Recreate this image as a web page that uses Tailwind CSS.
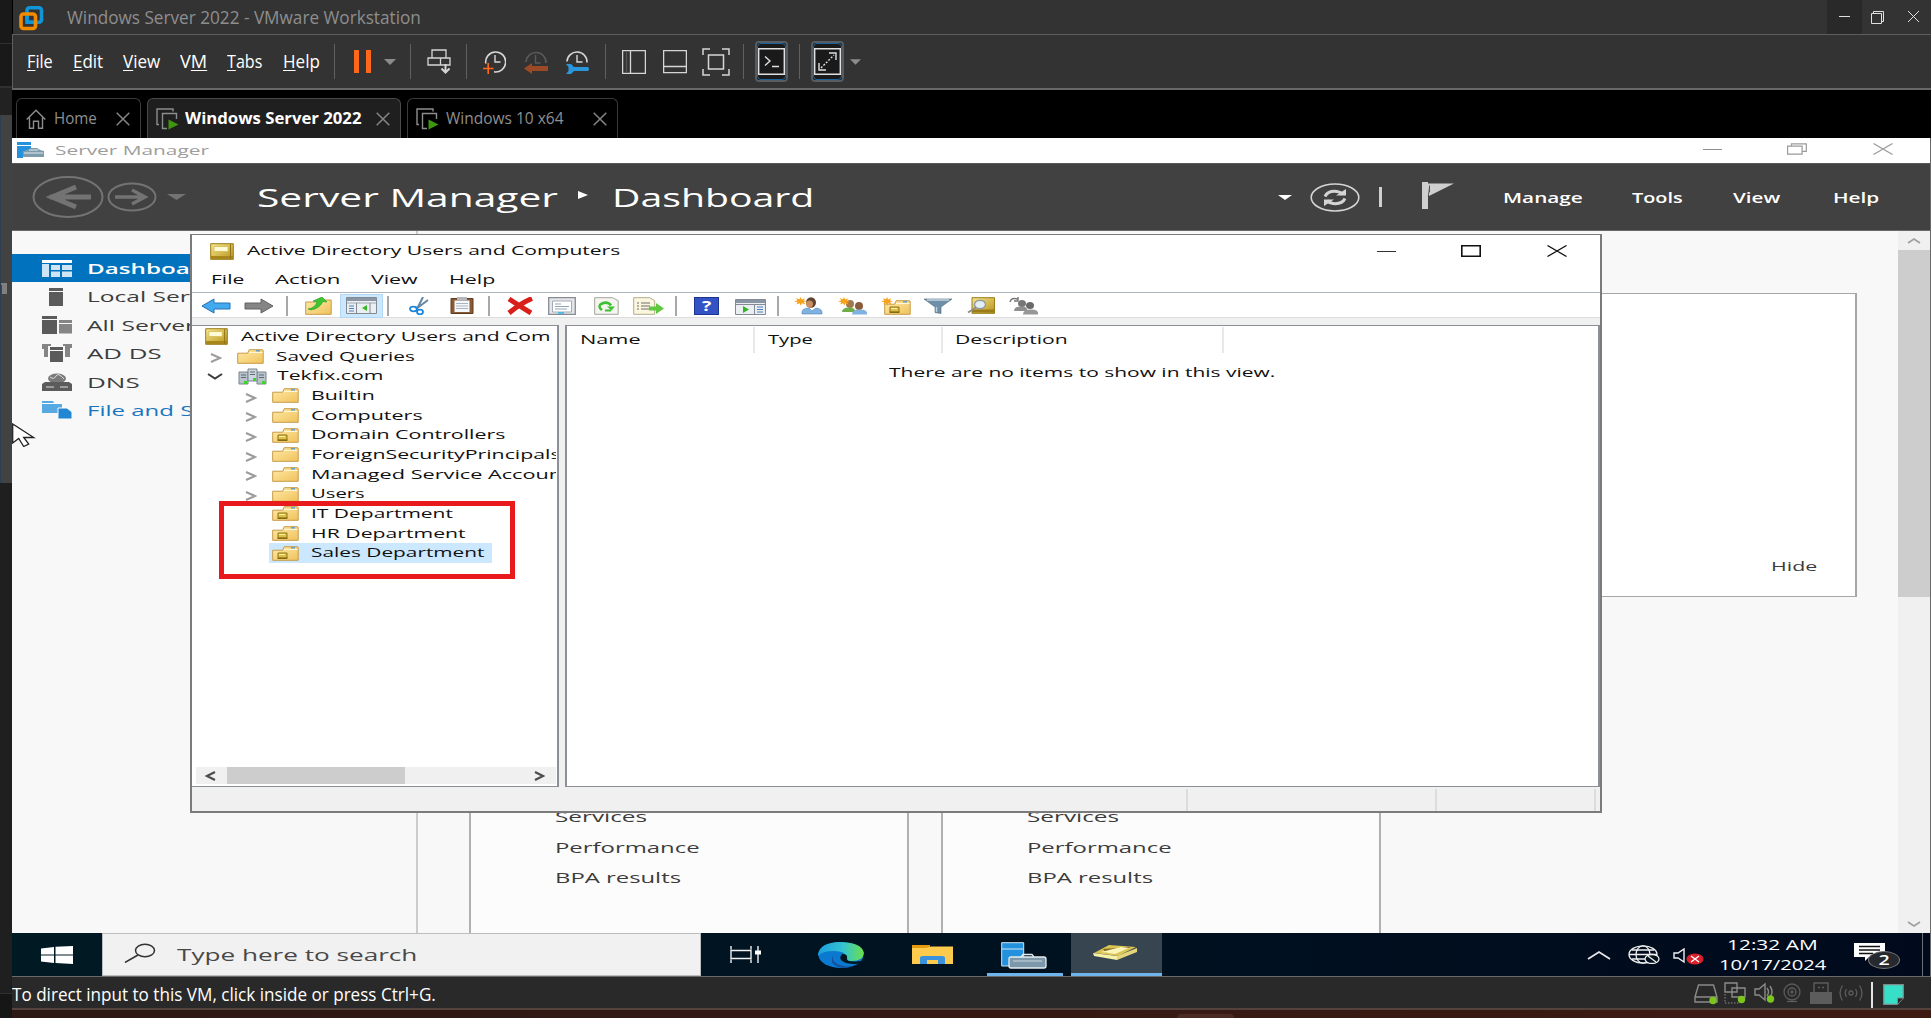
<!DOCTYPE html>
<html lang="en">
<head>
<meta charset="utf-8">
<title>Windows Server 2022 - VMware Workstation</title>
<script src="https://cdn.jsdelivr.net/npm/@tailwindcss/browser@4"></script>
</head>
<body class="w-[1931px] h-[1018px] overflow-hidden bg-[#1f1f1f] font-['Open_Sans',sans-serif] flex whitespace-nowrap">

<!-- shared glyphs -->
<svg class="absolute w-0 h-0">
  <defs>
    <linearGradient id="gold" x1="0" y1="0" x2="1" y2="1"><stop offset="0" stop-color="#ffeaa8"/><stop offset="1" stop-color="#f0c25c"/></linearGradient>
    <linearGradient id="book" x1="0" y1="0" x2="1" y2="1"><stop offset="0" stop-color="#f4e58e"/><stop offset="1" stop-color="#b8941a"/></linearGradient>
    <linearGradient id="edgeA" x1="0" y1="0" x2="1" y2="0"><stop offset="0" stop-color="#1a9fe0"/><stop offset=".55" stop-color="#35c3d0"/><stop offset="1" stop-color="#6be04a"/></linearGradient>
  </defs>
  <symbol id="folder" viewBox="0 0 27 15" preserveAspectRatio="none">
    <path d="M.7 4.2h10l1.5-3.5h13a1 1 0 0 1 1 1v12.600H.7z" fill="url(#gold)" stroke="#c79a48" stroke-width="1"/>
    <path d="M12 3.500h13.500" stroke="#fff6d8"/><path d="M19 1.800h4" stroke="#4b9be0" stroke-width="1.300"/>
  </symbol>
  <symbol id="ou" viewBox="0 0 27 15" preserveAspectRatio="none">
    <path d="M.7 4.200h10l1.500-3.500h13a1 1 0 0 1 1 1v12.600H.7z" fill="url(#gold)" stroke="#c79a48" stroke-width="1"/>
    <path d="M12 3.500h13.500" stroke="#fff6d8"/><path d="M19 1.800h4" stroke="#4b9be0" stroke-width="1.300"/>
    <path d="M6 7h9v5H6z" fill="#dcc04c" stroke="#937714"/><path d="M7 8.500h6" stroke="#fff3a0"/><path d="M5.500 12.300h10" stroke="#7c6410" stroke-width="1.200"/>
  </symbol>
  <symbol id="adbook" viewBox="0 0 24 17" preserveAspectRatio="none">
    <path d="M.7.700h22.600v15.600H.7z" fill="url(#book)" stroke="#9c7c18"/><path d="M1 13h22v3H1z" fill="#a8861c"/><path d="M4 3.500h14v5H4z" fill="#fffbd6" stroke="#d6bc50" stroke-width=".8"/><path d="M20.500 1v15" stroke="#8f7316"/>
  </symbol>
  <symbol id="chev" viewBox="0 0 12 10" preserveAspectRatio="none"><path d="M1 1l9 4-9 4" fill="none" stroke="#9c9c9c" stroke-width="2"/></symbol>
  <symbol id="vmtab" viewBox="0 0 23 22">
    <path d="M3 16.500H1V1h16v2.500" fill="none" stroke="#8d8d8d" stroke-width="1.400"/><path d="M11 20.500H6.500V5.500h14V11" fill="none" stroke="#8d8d8d" stroke-width="1.400"/><path d="M12.500 11.500l10 5-10 5z" fill="#3f960f"/>
  </symbol>
  <symbol id="tabx" viewBox="0 0 14 14"><path d="M.7.700l12.600 12.600M13.300.700L.7 13.300" stroke="#858585" stroke-width="1.500"/></symbol>
  <symbol id="burst" viewBox="0 0 14 12" preserveAspectRatio="none"><path d="M6.500 0l1.200 3.200L11 1.500 9.500 4.600l3.800.9-3.600 1.200L11.500 10 7.800 8.300 6.800 11.500 5.600 8.300 2.300 9.900l1.300-3L0 5.800l3.500-1.200L2 1.600l3.400 1.500z" fill="#f6a21c"/></symbol>
</svg>

<!-- strip of the window behind -->
<aside class="w-3 shrink-0 flex flex-col bg-[#1f1f1f]">
  <div class="h-[43px] bg-[#191919]"></div>
  <div class="h-px bg-[#303030]"></div>
  <div class="h-[42px] bg-[#191919]"></div>
  <div class="h-[2px] bg-[#303030]"></div>
  <div class="h-[27px] bg-[#222222]"></div>
  <div class="h-[368px] bg-[#424242] border-l border-[#2f4050] flex items-start"><div class="mt-[168px] w-[6px] h-[11px] border-t-2 border-r-[5px] border-[#808080]"></div></div>
  <div class="h-[510px] bg-[#1f1f1f]"></div>
  <div class="h-px bg-[#303030]"></div>
  <div class="flex-1 bg-[#161616]"></div>
</aside>

<main class="w-[1919px] shrink-0 flex flex-col">
  <!-- host title bar -->
  <header class="h-[34px] shrink-0 bg-[#333333] border-l border-black flex items-center">
    <svg class="ml-[6px] w-[25px] h-[25px] mt-[2px]" viewBox="0 0 25 25" fill="none" stroke-width="3.600"><rect x="8" y="1.800" width="14.500" height="14.500" rx="2.500" stroke="#0f95d8"/><rect x="2" y="8" width="14.500" height="14.500" rx="2.500" stroke="#f38b00"/><path d="M8 10v6.300h6" stroke="#0f95d8"/></svg>
    <span class="ml-[23px] text-[17.5px] text-[#8e8e8e] inline-block origin-left" data-w="354">Windows Server 2022 - VMware Workstation</span>
    <div class="ml-auto w-[35px] h-[34px] bg-[#292929] flex items-center justify-center"><div class="w-[11px] h-px bg-[#e0e0e0] -mt-px"></div></div>
    <svg class="ml-[9px] w-[13px] h-[13px]" viewBox="0 0 13 13" fill="none" stroke="#e0e0e0"><path d="M.5 2.500h10v10H.5zM2.500 2.500v-2h10v10h-2"/></svg>
    <svg class="ml-6 mr-[12px] w-[11px] h-[11px] mb-px" viewBox="0 0 11 11"><path d="M0 0l11 11M11 0L0 11" stroke="#e0e0e0"/></svg>
  </header>

  <!-- menu and toolbar -->
  <nav class="h-[56px] shrink-0 bg-[#333333] border-t border-l border-t-[#5e5e5e] border-l-[#5e5e5e] flex items-start">
    <div class="h-[53px] w-full flex items-center text-[17.500px] text-white">
      <span class="ml-[14px] inline-block origin-left" data-w="26"><u class="underline-offset-2">F</u>ile</span>
      <span class="ml-5 inline-block origin-left" data-w="30"><u class="underline-offset-2">E</u>dit</span>
      <span class="ml-5 inline-block origin-left" data-w="37"><u class="underline-offset-2">V</u>iew</span>
      <span class="ml-[20px] inline-block origin-left" data-w="27">V<u class="underline-offset-2">M</u></span>
      <span class="ml-[20px] inline-block origin-left" data-w="35"><u class="underline-offset-2">T</u>abs</span>
      <span class="ml-5 inline-block origin-left" data-w="37"><u class="underline-offset-2">H</u>elp</span>
      <div class="ml-[14px] w-px h-[35px] bg-[#606060]"></div>
      <div class="ml-[19px] w-[5px] h-[23px] bg-[#ff671b]"></div><div class="ml-[7px] w-[5px] h-[23px] bg-[#ff671b]"></div>
      <svg class="ml-[13px] w-3 h-[6px]" viewBox="0 0 12 6"><path d="M0 0h12L6 6z" fill="#8c8c8c"/></svg>
      <div class="ml-[14px] w-px h-[35px] bg-[#606060]"></div>
      <svg class="ml-4 w-6 h-[25px]" viewBox="0 0 24 25" fill="none" stroke="#d6d6d6" stroke-width="1.300"><path d="M5 9V1h14v8M1 9h22v7H1zM13.500 9v7"/><path d="M18.500 15v8M14.500 19.500l4 4 4-4" stroke-width="2"/></svg>
      <div class="ml-[15px] w-px h-[35px] bg-[#606060]"></div>
      <svg class="ml-4 w-[23px] h-6" viewBox="0 0 23 24" fill="none"><path d="M2.800 13.500A10 10 0 1 1 11 21.800" stroke="#d6d6d6" stroke-width="1.600"/><path d="M12 5v7h5.500" stroke="#d6d6d6" stroke-width="1.400"/><path d="M0 18.500h10.500M5.200 13v11" stroke="#ff671b" stroke-width="1.600"/></svg>
      <svg class="ml-[18px] w-[24px] h-6" viewBox="0 0 24 24" fill="none"><path d="M2 12a10 10 0 1 1 20 1" stroke="#5a5a5a" stroke-width="1.600"/><path d="M11.500 5v8h5" stroke="#5a5a5a" stroke-width="1.400"/><path d="M0 18.500l8-5.500v3h16v5H8v3z" fill="#9b4a25"/></svg>
      <svg class="ml-[17px] w-[25px] h-6" viewBox="0 0 25 24" fill="none"><path d="M2 11.500a10 10 0 1 1 20 1" stroke="#d6d6d6" stroke-width="1.600"/><path d="M12 5v7h5.500" stroke="#d6d6d6" stroke-width="1.400"/><path d="M1 14h5l3 3h14q2 2 0 4H9l-3 3H1l2.500-3v-4z" fill="#2a96dc"/></svg>
      <div class="ml-[15px] w-px h-[35px] bg-[#606060]"></div>
      <svg class="ml-[16px] w-6 h-6" viewBox="0 0 24 24" fill="none" stroke="#d6d6d6" stroke-width="1.300"><path d="M.6.600h22.800v22.800H.6zM8.500.600v22.800" /><path d="M4.500 1v22" stroke="#555"/></svg>
      <svg class="ml-[17px] w-6 h-6" viewBox="0 0 24 24" fill="none" stroke="#d6d6d6" stroke-width="1.300"><path d="M.6.600h22.800v22H.6zM.6 16.500h22.800"/></svg>
      <svg class="ml-[15px] w-7 h-7" viewBox="0 0 28 28" fill="none" stroke="#d6d6d6" stroke-width="1.500"><path d="M6.500 7h15v14h-15zM1 7V1h7M20 1h7v6M27 21v6h-7M8 27H1v-6"/></svg>
      <div class="ml-[13px] w-px h-[35px] bg-[#606060]"></div>
      <div class="ml-[11px] w-[33px] h-[41px] rounded border-2 border-[#565c62] bg-[#1a1a1a]"><div class="w-full h-full border border-[#1c639c] rounded-sm flex items-center justify-center"><svg class="w-[27px] h-[27px]" viewBox="0 0 27 27" fill="none" stroke="#e0e0e0" stroke-width="1.400"><path d="M.7.700h25.600v25.600H.7z"/><path d="M7 8.500l5 4.500-5 4.500M14 18.500h7"/></svg></div></div>
      <div class="ml-[11px] w-px h-[35px] bg-[#606060]"></div>
      <div class="ml-[11px] w-[33px] h-[41px] rounded border-2 border-[#565c62] bg-[#1a1a1a]"><div class="w-full h-full border border-[#1c639c] rounded-sm flex items-center justify-center"><svg class="w-[27px] h-[27px]" viewBox="0 0 27 27" fill="none" stroke="#e0e0e0" stroke-width="1.400"><path d="M.7.700h25.600v25.600H.7z"/><path d="M15 5h7v7M5 15v7h7"/><path d="M7 20L20 7" stroke-dasharray="2 1.500"/></svg></div></div>
      <svg class="ml-[6px] w-[11px] h-[6px]" viewBox="0 0 12 6"><path d="M0 0h12L6 6z" fill="#8c8c8c"/></svg>
    </div>
  </nav>

  <!-- tabs -->
  <div class="h-12 shrink-0 bg-black flex items-end pl-[4px] -mt-[2px] border-t-2 border-[#676767] box-content text-[15.500px] text-[#8f8f8f]">
    <div class="w-[125px] h-10 border border-b-0 border-[#3a3a3a] rounded-t-md flex items-center">
      <svg class="ml-[9px] w-5 h-5 shrink-0" viewBox="0 0 20 20" fill="none" stroke="#8d8d8d" stroke-width="1.400"><path d="M.7 10.500L10 1.200l9.300 9.300M3.500 8.500v10.800h4v-7h5v7h4V8.500"/></svg>
      <span class="ml-[8px] inline-block origin-left" data-w="43">Home</span>
      <svg class="ml-[19px] w-[14px] h-[14px] shrink-0"><use href="#tabx"/></svg>
    </div>
    <div class="ml-[6px] w-[254px] h-10 bg-[#1f1f1f] border border-b-0 border-[#4a4a4a] rounded-t-md flex items-center">
      <svg class="ml-2 w-[23px] h-[22px] shrink-0"><use href="#vmtab"/></svg>
      <span class="ml-[6px] font-bold text-white inline-block origin-left" data-w="177">Windows Server 2022</span>
      <svg class="ml-[14px] w-[14px] h-[14px] shrink-0"><use href="#tabx"/></svg>
    </div>
    <div class="ml-[6px] w-[211px] h-10 border border-b-0 border-[#3a3a3a] rounded-t-md flex items-center">
      <svg class="ml-2 w-[23px] h-[22px] shrink-0"><use href="#vmtab"/></svg>
      <span class="ml-[7px] inline-block origin-left" data-w="118">Windows 10 x64</span>
      <svg class="ml-[29px] w-[14px] h-[14px] shrink-0"><use href="#tabx"/></svg>
    </div>
  </div>

  <!-- guest screen -->
  <section class="relative h-[839px] shrink-0 border-r border-[#6a6a6a] bg-[#f8f8f8] flex flex-col overflow-hidden">
    <!-- Server Manager title bar -->
    <div class="h-[26px] shrink-0 bg-white border-b border-[#5a5a5a] flex items-center">
      <svg class="ml-[5px] w-[27px] h-4 mb-px" viewBox="0 0 27 16"><path d="M0 0h14v3H0zM0 4h14v3l-8 3v6H0z" fill="#2590dc"/><path d="M6 9l5-1 3-2h6l3 2 4 1v6H6z" fill="#7e9bac"/><path d="M12 8h9M7 11h19" stroke="#dfe9ee" fill="none"/></svg>
      <span class="ml-[11px] text-[13px] text-[#9d9d9d] inline-block origin-left" data-w="154">Server Manager</span>
      <svg class="ml-auto w-[19px] h-3 mb-[3px]" viewBox="0 0 19 12"><path d="M0 6.500h19" stroke="#8f8f8f"/></svg>
      <svg class="ml-[65px] w-5 h-3 mb-[3px]" viewBox="0 0 20 12" fill="none" stroke="#9a9a9a" stroke-width="1.200"><path d="M.6 3.200h14.500v8H.6zM4.500 3V.800h14.800v7.500h-4"/></svg>
      <svg class="ml-[66px] mr-[37px] w-5 h-3 mb-[3px]" viewBox="0 0 20 12"><path d="M.5.500l19 11M19.500.500l-19 11" stroke="#9a9a9a" stroke-width="1.200"/></svg>
    </div>
    <!-- Server Manager header -->
    <div class="h-[67px] shrink-0 bg-[#414141] border-b border-[#6a6a6a] flex items-center text-white">
      <svg class="ml-5 w-[154px] h-[42px] shrink-0" viewBox="0 0 154 42" fill="none" stroke="#737373"><ellipse cx="36" cy="21" rx="34.500" ry="20" stroke-width="2"/><path d="M59 21H18M44 11L20 21l24 10" stroke-width="5"/><ellipse cx="100" cy="21" rx="23.500" ry="13.500" stroke-width="2"/><path d="M83 21h29M100 14l13 7-13 7" stroke-width="3.500"/><path d="M135 18h19l-9.500 6z" fill="#737373" stroke="none"/></svg>
      <span class="ml-[71px] text-[26px] leading-none inline-block origin-left" data-w="301">Server Manager</span>
      <svg class="ml-[20px] w-[10px] h-2 mb-1 shrink-0" viewBox="0 0 10 8"><path d="M0 0l10 4-10 4z" fill="#fff"/></svg>
      <span class="ml-[24px] text-[26px] leading-none inline-block origin-left" data-w="202">Dashboard</span>
      <svg class="ml-[464px] w-[14px] h-[5px] shrink-0" viewBox="0 0 14 5"><path d="M0 0h14L7 5z" fill="#fff"/></svg>
      <svg class="ml-[18px] w-[50px] h-[29px] shrink-0" viewBox="0 0 50 29" fill="none" stroke="#d4d4d4"><ellipse cx="25" cy="14.500" rx="23.800" ry="13.500" stroke-width="1.600"/><path d="M15 13.500q3-6 12-5 4 .5 6 3M35 15.500q-3 6-12 5-4-.5-6-3" stroke-width="3"/><path d="M36 6v6.500H26zM14 23v-6.500h10z" fill="#d4d4d4" stroke="none"/></svg>
      <div class="ml-[19px] w-[3px] h-5 bg-[#cfcfcf]"></div>
      <svg class="ml-[40px] w-8 h-[27px] mb-1 shrink-0" viewBox="0 0 32 27"><path d="M0 0h6v27H0z" fill="#cfcfcf"/><path d="M5.500 1.500H32L7 14z" fill="#cfcfcf"/><path d="M7.500 3.500v7" stroke="#555"/></svg>
      <div class="w-[376px] shrink-0 ml-[49px] grid grid-cols-[129px_101px_100px_46px] text-[14px] font-semibold">
        <span class="inline-block origin-left justify-self-start" data-w="80">Manage</span><span class="inline-block origin-left justify-self-start" data-w="51">Tools</span><span class="inline-block origin-left justify-self-start" data-w="47">View</span><span class="inline-block origin-left justify-self-start" data-w="46">Help</span>
      </div>
    </div>

    <!-- Server Manager body -->
    <div class="h-[702px] shrink-0 flex text-[15px] text-[#3c3c3c]">
      <div class="w-[406px] shrink-0 border-r-2 border-[#cccccc] pt-[23px] flex flex-col">
        <div class="h-[28.400px] bg-[#0072be] text-white font-semibold flex items-center pl-[30px]">
          <svg class="w-[30px] h-[17px]" viewBox="0 0 30 17"><path d="M0 0h30v3H0z" fill="#fff"/><path d="M0 4h7v13H0zM9 5h9v5H9zM20 5h10v5H20zM9 11.500h9V17H9zM20 11.500h10V17H20z" fill="#cfe4f4"/></svg>
          <span class="ml-[15px] inline-block origin-left" data-w="129">Dashboard</span>
        </div>
        <div class="h-[28.400px] flex items-center pl-[30px]">
          <svg class="w-[30px] h-[18px]" viewBox="0 0 30 18"><path d="M7 0h14v3H7zM7 4h14v14H7z" fill="#5b5b5b"/></svg>
          <span class="ml-[15px] inline-block origin-left" data-w="139">Local Server</span>
        </div>
        <div class="h-[28.400px] flex items-center pl-[30px]">
          <svg class="w-[30px] h-[18px]" viewBox="0 0 30 18"><path d="M0 0h15v3H0zM0 4h15v14H0z" fill="#5b5b5b"/><path d="M17 4h13v3H17zM17 8h13v9.500H17z" fill="#858585"/></svg>
          <span class="ml-[15px] inline-block origin-left" data-w="120">All Servers</span>
        </div>
        <div class="h-[28.400px] flex items-center pl-[30px]">
          <svg class="w-[30px] h-[18px]" viewBox="0 0 30 18"><path d="M0 0h9v2H6v11H2V5H0zM30 0h-9v2h2v11h5V4h2z" fill="#858585"/><path d="M8 3h13v3H8zM8 7h13v11H8z" fill="#5b5b5b"/></svg>
          <span class="ml-[15px] inline-block origin-left" data-w="74">AD DS</span>
        </div>
        <div class="h-[28.400px] flex items-center pl-[30px]">
          <svg class="w-[30px] h-[18px]" viewBox="0 0 30 18"><ellipse cx="15" cy="5.500" rx="9" ry="5" fill="#7a7a7a"/><path d="M8 4q4 3 6-1t8 3" stroke="#ddd" fill="none"/><path d="M3 9h24l3 2v7H0v-7z" fill="#5b5b5b"/><path d="M4 14h8M18 14h8" stroke="#ddd"/></svg>
          <span class="ml-[15px] inline-block origin-left" data-w="52">DNS</span>
        </div>
        <div class="h-[28.400px] flex items-center pl-[30px] text-[#1a75c0]">
          <svg class="w-[30px] h-[18px]" viewBox="0 0 30 18"><path d="M0 0h11l1 2h8v10H0z" fill="#57a9e2"/><path d="M0 2.500h20" stroke="#fff"/><path d="M16 7h9l5 4v7H16z" fill="#2187d4" stroke="#f8f8f8"/></svg>
          <span class="ml-[15px] inline-block origin-left" data-w="277">File and Storage Services</span>
        </div>
      </div>
      <div class="w-[1480px] shrink-0 relative flex flex-col">
        <div class="mt-[62px] ml-[51px] w-[1388px] h-[304px] bg-white border border-r-2 border-[#a6a6a6] flex items-end justify-end pr-[38px] pb-5 text-[13px]"><span class="inline-block origin-left" data-w="46">Hide</span></div>
        <div class="ml-[51px] mt-6 flex gap-[32px] flex-1 text-[14px]">
          <div class="w-[440px] bg-[#fcfcfc] border-x-2 border-[#b0b0b0] pl-[84px] pt-[181px] flex flex-col items-start leading-[30.700px]"><span class="inline-block origin-left" data-w="92">Services</span><span class="inline-block origin-left" data-w="145">Performance</span><span class="inline-block origin-left" data-w="126">BPA results</span></div>
          <div class="w-[440px] bg-[#fcfcfc] border-x-2 border-[#b0b0b0] pl-[84px] pt-[181px] flex flex-col items-start leading-[30.700px]"><span class="inline-block origin-left" data-w="92">Services</span><span class="inline-block origin-left" data-w="145">Performance</span><span class="inline-block origin-left" data-w="126">BPA results</span></div>
        </div>
      </div>
      <div class="w-8 shrink-0 bg-[#f0f0f0] flex flex-col items-center">
        <svg class="mt-[7px] w-[14px] h-[6px]" viewBox="0 0 14 6"><path d="M1 5l6-4 6 4" fill="none" stroke="#a0a0a0" stroke-width="1.700"/></svg>
        <div class="mt-[6px] w-full h-[347px] bg-[#cdcdcd]"></div>
        <svg class="mt-auto mb-[6px] w-[14px] h-[6px]" viewBox="0 0 14 6"><path d="M1 1l6 4 6-4" fill="none" stroke="#a0a0a0" stroke-width="1.700"/></svg>
      </div>
    </div>

    <!-- guest taskbar -->
    <div class="h-[44px] shrink-0 flex items-center bg-linear-to-r from-[#001a24] to-[#000a1c] text-white border-b border-[#6a6a6a]">
      <svg class="ml-[29px] w-8 h-[18px]" viewBox="0 0 32 18" fill="#fff"><path d="M0 2.500L13 1v7.500H0zM14.500.800L32 0v8.500H14.500zM0 9.500h13V17L0 15.500zM14.500 9.500H32V18l-17.500-.9z"/></svg>
      <div class="ml-[29px] w-[599px] h-full bg-[#f1f1f1] border border-[#bdbdbd] flex items-center">
        <svg class="ml-[21px] w-8 h-5 mb-1" viewBox="0 0 32 20" fill="none" stroke="#333" stroke-width="1.500"><ellipse cx="21" cy="7.500" rx="9.500" ry="6.300"/><path d="M14 12L1 19.500"/></svg>
        <span class="ml-[21px] text-[16px] text-[#484848] inline-block origin-left" data-w="240">Type here to search</span>
      </div>
      <svg class="ml-[29px] w-8 h-[17px]" viewBox="0 0 32 17" fill="none" stroke="#f0f0f0" stroke-width="1.400"><path d="M1 4.500h20v8H1zM1 0v3.500M21 0v3.500M1 13.500V17M21 13.500V17M28 0v17"/><path d="M25 4.500h6v4h-6z" fill="#fff" stroke="none"/></svg>
      <svg class="ml-14 w-[46px] h-[26px]" viewBox="0 0 46 26"><ellipse cx="23" cy="13" rx="22.500" ry="13" fill="#0b79d0"/><path d="M0 12Q2 1 20 0q24 0 26 11-1 8-12 8-8 0-6-4 0-6-12-6Q4 9 0 14z" fill="url(#edgeA)"/><path d="M17 11q-6 8 5 12 10 4 20-2Q34 26 24 26 8 22 17 11z" fill="#12519c"/><path d="M24 12q6 0 5 4-1 5 13 3l1 2q-6 2-15 0-9-3-4-9z" fill="#02161f"/></svg>
      <svg class="ml-[48px] w-[41px] h-5" viewBox="0 0 41 20"><path d="M0 0h18v4H0z" fill="#e39a0c"/><path d="M0 3h14l5-1.500h22V19H0z" fill="#fccb4e"/><path d="M8 19v-6q0-2 3-2h19q3 0 3 2v6h-7v-4H15v4z" fill="#3b92dc"/></svg>
      <div class="ml-[34px] w-[76px] h-full border-b-[3px] border-[#6fb4ea] flex pl-[14px] pt-[9px]">
        <svg class="w-[46px] h-[27px]" viewBox="0 0 46 27"><path d="M.7.700h22V15l-12 9H.7z" fill="#2391dd" stroke="#cfe6f7"/><path d="M1 7h21" stroke="#cfe6f7"/><rect x="8" y="15" width="37" height="11" rx="2" fill="#7d98aa" stroke="#e4edf2" stroke-width="1.300"/><path d="M20 15l2-2.500h9l2 2.500" fill="none" stroke="#e4edf2" stroke-width="1.300"/><path d="M12 19h29" stroke="#c9d8e0"/></svg>
      </div>
      <div class="ml-[8px] w-[91px] h-full bg-[#364550] border-b-[3px] border-[#6fb4ea] flex pl-[22px] pt-[11px]">
        <svg class="w-[45px] h-[17px]" viewBox="0 0 45 17"><path d="M1 9L16 1l27 2-18 9z" fill="#dcc453"/><path d="M10 5l28-2-10 4-15 2z" fill="#7c681c"/><path d="M0 9l24 3v4L1 12z" fill="#f6f0a8"/><path d="M24 12L44 4v4L24 16z" fill="#e5d67a"/><path d="M8 8l20-5 8 1-14 6z" fill="#fbf4b6"/></svg>
      </div>
      <svg class="ml-auto w-6 h-[10px]" viewBox="0 0 24 10"><path d="M1 9l11-7 11 7" fill="none" stroke="#e8e8e8" stroke-width="1.700"/></svg>
      <svg class="ml-[17px] w-8 h-[19px]" viewBox="0 0 32 19" fill="none" stroke="#f0f0f0" stroke-width="1.300"><ellipse cx="15" cy="9.500" rx="14" ry="8.700"/><ellipse cx="15" cy="9.500" rx="7" ry="8.700"/><path d="M1 9.500h28M4 5h22M4 14h15"/><ellipse cx="24" cy="14" rx="7" ry="4.500" fill="#02101e"/><path d="M20 11l8 6"/></svg>
      <svg class="ml-[13px] w-[31px] h-[17px] mt-[3px]" viewBox="0 0 31 17"><path d="M1 5h4l6-4v13l-6-4H1z" fill="none" stroke="#f0f0f0" stroke-width="1.400"/><ellipse cx="22" cy="11" rx="8.500" ry="5.500" fill="#d9202b"/><path d="M18 8l8 6M26 8l-8 6" stroke="#fff" stroke-width="1.400"/></svg>
      <div class="ml-[15px] w-[107px] text-[14px] leading-[19.500px] flex flex-col"><span class="ml-[8px] self-start inline-block origin-left" data-w="91">12:32 AM</span><span class="self-start inline-block origin-left" data-w="107">10/17/2024</span></div>
      <div class="ml-[28px] relative w-[46px] h-[27px] mt-1">
        <svg class="w-[31px] h-[18px]" viewBox="0 0 31 18"><path d="M0 0h31v14H15l-4 4v-4H0z" fill="#fff"/><path d="M5 3.500h21M5 7h21M5 10.500h14" stroke="#111" stroke-width="1.300"/></svg>
        <div class="absolute left-[14px] top-[8px] w-[32px] h-[18px] rounded-[50%] bg-[#26292e] border border-[#7a7a7a] flex items-center justify-center text-[14px] font-semibold leading-none"><span class="inline-block scale-x-140">2</span></div>
      </div>
      <div class="ml-[22px] mr-[7px] w-px h-full bg-[#6a7076]"></div>
    </div>

    <!-- Active Directory Users and Computers window -->
    <div class="absolute left-[178px] top-[96px] w-[1412px] h-[579px] bg-white border-2 border-t border-[#7b7b7b] flex flex-col text-[13px] text-[#111]">
      <div class="h-[32px] shrink-0 flex items-center">
        <svg class="ml-[18px] w-6 h-[17px]"><use href="#adbook"/></svg>
        <span class="ml-[13px] inline-block origin-left" data-w="374">Active Directory Users and Computers</span>
        <svg class="ml-auto w-[19px] h-3" viewBox="0 0 19 12"><path d="M0 6.500h19" stroke="#333"/></svg>
        <svg class="ml-[65px] w-5 h-3" viewBox="0 0 20 12"><path d="M.8.800h18.400v10.400H.8z" fill="none" stroke="#111" stroke-width="1.600"/></svg>
        <svg class="ml-[66px] mr-[33px] w-5 h-3" viewBox="0 0 20 12"><path d="M.5.500l19 11M19.500.500l-19 11" stroke="#111" stroke-width="1.300"/></svg>
      </div>
      <div class="h-[26px] shrink-0 flex items-center border-b border-[#aeb4bb]">
        <span class="ml-[19px] inline-block origin-left" data-w="34">File</span>
        <span class="ml-[30px] inline-block origin-left" data-w="65">Action</span>
        <span class="ml-[31px] inline-block origin-left" data-w="46">View</span>
        <span class="ml-[32px] inline-block origin-left" data-w="46">Help</span>
      </div>
      <div class="h-[25px] shrink-0 flex items-center border-b border-[#dcdcdc] pt-px">
        <svg class="ml-[9px] w-[30px] h-4" viewBox="0 0 30 16"><path d="M1 8l12-7v4h16v6H13v4z" fill="#43aaf0" stroke="#2472b4"/></svg>
        <svg class="ml-[13px] w-[30px] h-4" viewBox="0 0 30 16"><path d="M29 8L17 1v4H1v6h16v4z" fill="#858585" stroke="#636363"/></svg>
        <div class="ml-3 w-[2px] h-5 bg-[#a8a8a8]"></div>
        <svg class="ml-[17px] w-[27px] h-[18px]" viewBox="0 0 27 18"><path d="M.7 5h10l1.500-2h14v14.300H.7z" fill="url(#gold)" stroke="#c79a48"/><path d="M3 12q7-1 9-7l-4-1 9-4 5 5-4-.5Q14 12 6 13z" fill="#3cc431" stroke="#229a1e" stroke-width=".6"/></svg>
        <div class="ml-[8px] w-[43px] h-6 bg-[#cce8ff] border border-[#b2d8f5] flex items-center justify-center"><svg class="w-[31px] h-[17px]" viewBox="0 0 31 17"><path d="M.5.500h30v16H.5z" fill="#eceff2" stroke="#828a94"/><path d="M1 1h29v3H1z" fill="#8a96a4"/><path d="M1 6h29" stroke="#a0a8b0"/><path d="M10.500 6v10M24 6v10" stroke="#828a94"/><path d="M3 9h5M3 11.500h5M3 14h5" stroke="#4a7fc0"/><path d="M21 8v6l-5-3z" fill="#35b52a"/></svg></div>
        <div class="ml-1 w-[2px] h-5 bg-[#a8a8a8]"></div>
        <svg class="ml-[20px] w-5 h-[18px]" viewBox="0 0 20 18" fill="none"><path d="M14 0L8 12M19 3L7 12" stroke="#6487a4" stroke-width="2"/><ellipse cx="4.500" cy="12" rx="3.500" ry="2.300" stroke="#1b86da" stroke-width="1.800"/><ellipse cx="11" cy="15" rx="3" ry="2.300" stroke="#1b86da" stroke-width="1.800"/></svg>
        <svg class="ml-[21px] w-6 h-[17px]" viewBox="0 0 24 17"><path d="M1 1.500h22v15H1z" fill="#8a5a34" stroke="#5f3c20"/><path d="M4.500 3.500h15v11.500h-15z" fill="#f5f7fa"/><path d="M7 0h10v3.500H7z" fill="#b4b8be"/><path d="M6 6.500h12M6 9h12M6 11.500h12" stroke="#a7b4c4"/></svg>
        <div class="ml-[14px] w-[2px] h-5 bg-[#a8a8a8]"></div>
        <svg class="ml-[15px] w-[30px] h-[18px]" viewBox="0 0 30 18"><path d="M4 2q12 8 22 14M27 1.500Q16 6 4 16" stroke="#d91f1a" stroke-width="5" fill="none"/></svg>
        <svg class="ml-[13px] w-7 h-[18px]" viewBox="0 0 28 18"><path d="M.7.700h26.600v16.600H.7z" fill="#e3e6ea" stroke="#868c94" stroke-width="1.300"/><path d="M4.500 4h19v11h-19z" fill="#fff" stroke="#a5abb3"/><path d="M7 7h6M7 9.500h14M7 12h12" stroke="#93a4b5"/><path d="M10 16h6" stroke="#2bb5ec" stroke-width="1.500"/></svg>
        <svg class="ml-[18px] w-[25px] h-[18px]" viewBox="0 0 25 18"><path d="M.7.700h18l5.500 3v13.600H.7z" fill="#f4f5ef" stroke="#a2a39a"/><path d="M8 13Q3 9 8 6.500q6-2.500 9 2" fill="none" stroke="#3fbf34" stroke-width="2.600"/><path d="M13 9.500h8l-3.500 4z" fill="#3fbf34"/><path d="M11 13.500h6" stroke="#3fbf34" stroke-width="2"/></svg>
        <svg class="ml-[14px] w-[31px] h-[18px]" viewBox="0 0 31 18"><path d="M.7.700h16l5 3v13.600H.7z" fill="#fbf7df" stroke="#b3ac8a"/><path d="M4 6h2M4 9h2M4 12h2M8 6h9M8 9h9M8 12h9" stroke="#6d6d6d"/><path d="M16 9.500h7V6l8 5.500-8 5.500v-3.500h-7z" fill="#5ec93e"/></svg>
        <div class="ml-[11px] w-[2px] h-5 bg-[#a8a8a8]"></div>
        <div class="ml-[17px] w-[25px] h-[18px] bg-[#3352c4] border border-[#1c3490] text-white font-bold text-[15px] leading-none flex items-center justify-center"><span class="inline-block scale-x-130">?</span></div>
        <svg class="ml-[16px] w-[31px] h-[17px] mt-1" viewBox="0 0 31 17"><path d="M.5.500h30v15H.5z" fill="#eceff2" stroke="#828a94"/><path d="M1 1h29v3H1z" fill="#8a96a4"/><path d="M19.500 5v11M1 5.500h29" stroke="#828a94"/><path d="M22 8h6M22 10.500h6M22 13h6" stroke="#4a7fc0"/><path d="M8 7v7l6-3.500z" fill="#35b52a"/></svg>
        <div class="ml-[11px] w-[2px] h-5 bg-[#a8a8a8]"></div>
        <svg class="ml-[15px] w-[29px] h-[18px]" viewBox="0 0 29 18"><ellipse cx="17" cy="5.500" rx="5" ry="5.200" fill="#5f4332"/><ellipse cx="15.500" cy="7" rx="3.500" ry="3.500" fill="#c98f60"/><path d="M8 17q-1-6 7-6l3 3 4-3q7 1 6 6z" fill="#7fb2e0" stroke="#4d83b6" stroke-width=".6"/><use href="#burst" width="14" height="9"/></svg>
        <svg class="ml-[15px] w-[30px] h-[18px]" viewBox="0 0 30 18"><ellipse cx="12" cy="7" rx="4" ry="4" fill="#a3774d"/><path d="M4 15q0-4.500 7-4.500t6 4.500z" fill="#6fae49"/><ellipse cx="21" cy="9" rx="4" ry="4" fill="#8a5c3c"/><path d="M14 17.500q0-5 8-5t7 5z" fill="#7fb2e0"/><use href="#burst" width="13" height="9"/></svg>
        <svg class="ml-[13px] w-[30px] h-[18px]" viewBox="0 0 30 18"><use href="#ou" x="3" y="3" width="27" height="15"/><use href="#burst" width="13" height="9"/></svg>
        <svg class="ml-[13px] w-7 h-4" viewBox="0 0 28 16"><path d="M0 1h28L17 9v6.500l-6-1V9z" fill="#6f8fa8" stroke="#4e6a80" stroke-width=".6"/><path d="M3 2h22" stroke="#dbe7ef" stroke-width="1.200"/><path d="M12.500 9v5" stroke="#bcd0de" stroke-width="1.500"/></svg>
        <svg class="ml-[15px] w-7 h-[17px]" viewBox="0 0 28 17"><path d="M5 .700h22.500v15.600H5z" fill="url(#book)" stroke="#9c7c18"/><path d="M5 14h22" stroke="#9c7c18" stroke-width="3"/><ellipse cx="13" cy="7.500" rx="5.500" ry="4.200" fill="#e4eef4" stroke="#8a9aa5" stroke-width="1.300"/><path d="M9 10.500l-8 5" stroke="#8d8d8d" stroke-width="2"/></svg>
        <svg class="ml-[14px] w-[30px] h-[18px]" viewBox="0 0 30 18"><path d="M1 5q1-5 8-3M9 0v4H5" fill="none" stroke="#777" stroke-width="1.400"/><ellipse cx="13" cy="6.500" rx="4" ry="3.500" fill="#777"/><path d="M5 14q0-4.500 7-4.500t6 4.500z" fill="#8f8f8f"/><ellipse cx="21" cy="8.500" rx="4" ry="3.500" fill="#6a6a6a"/><path d="M14 17.500q0-5 8-5t7 5z" fill="#979797"/></svg>
      </div>
      <div class="h-[469px] shrink-0 bg-[#f0f0f0] pt-[7px] flex">
        <!-- tree -->
        <div class="w-[367px] shrink-0 bg-white border border-l-0 border-r-2 border-[#8b9098] overflow-hidden flex flex-col">
          <div class="pt-px flex flex-col w-[364px] overflow-hidden">
            <div class="h-[19.660px] flex items-center"><svg class="ml-[13px] w-[23px] h-[17px]"><use href="#adbook"/></svg><div class="ml-[13px] w-[311px] overflow-hidden"><span class="inline-block origin-left" data-w="374">Active Directory Users and Computers</span></div></div>
            <div class="h-[19.660px] flex items-center"><svg class="ml-[18px] mt-1 w-3 h-[10px]"><use href="#chev"/></svg><svg class="ml-[15px] w-[27px] h-[15px]"><use href="#folder"/></svg><span class="ml-[12px] inline-block origin-left" data-w="139">Saved Queries</span></div>
            <div class="h-[19.660px] flex items-center"><svg class="ml-[15px] w-4 h-[7px]" viewBox="0 0 16 7"><path d="M1 1l7 4.500L15 1" fill="none" stroke="#3a3a3a" stroke-width="2"/></svg>
              <svg class="ml-[15px] w-[29px] h-[17px]" viewBox="0 0 29 17"><path d="M1 4h9v12H1zM19 4h9v12h-9z" fill="#b8c3cc" stroke="#78858f"/><path d="M10 1h9v12h-9z" fill="#cdd6dd" stroke="#78858f"/><path d="M3 7h5M3 9.500h5M12 4h5M12 6.500h5M21 7h5M21 9.500h5" stroke="#5e6b75"/><path d="M6 13h3v3H6zM15 10h3v3h-3zM24 13h3v3h-3z" fill="#3ed52b"/></svg>
              <span class="ml-[10px] inline-block origin-left" data-w="106">Tekfix.com</span></div>
            <div class="h-[19.660px] flex items-center"><svg class="ml-[53px] mt-1 w-3 h-[10px]"><use href="#chev"/></svg><svg class="ml-[15px] w-[27px] h-[15px]"><use href="#folder"/></svg><span class="ml-[12px] inline-block origin-left" data-w="64">Builtin</span></div>
            <div class="h-[19.660px] flex items-center"><svg class="ml-[53px] mt-1 w-3 h-[10px]"><use href="#chev"/></svg><svg class="ml-[15px] w-[27px] h-[15px]"><use href="#folder"/></svg><span class="ml-[12px] inline-block origin-left" data-w="111">Computers</span></div>
            <div class="h-[19.660px] flex items-center"><svg class="ml-[53px] mt-1 w-3 h-[10px]"><use href="#chev"/></svg><svg class="ml-[15px] w-[27px] h-[15px]"><use href="#ou"/></svg><span class="ml-[12px] inline-block origin-left" data-w="194">Domain Controllers</span></div>
            <div class="h-[19.660px] flex items-center"><svg class="ml-[53px] mt-1 w-3 h-[10px] shrink-0"><use href="#chev"/></svg><svg class="ml-[15px] w-[27px] h-[15px] shrink-0"><use href="#folder"/></svg><span class="ml-[12px] inline-block origin-left" data-w="249">ForeignSecurityPrincipals</span></div>
            <div class="h-[19.660px] flex items-center"><svg class="ml-[53px] mt-1 w-3 h-[10px] shrink-0"><use href="#chev"/></svg><svg class="ml-[15px] w-[27px] h-[15px] shrink-0"><use href="#folder"/></svg><span class="ml-[12px] inline-block origin-left" data-w="270">Managed Service Accounts</span></div>
            <div class="h-[19.660px] flex items-center"><svg class="ml-[53px] mt-1 w-3 h-[10px]"><use href="#chev"/></svg><svg class="ml-[15px] w-[27px] h-[15px]"><use href="#folder"/></svg><span class="ml-[12px] inline-block origin-left" data-w="53">Users</span></div>
            <div class="h-[19.660px] flex items-center"><svg class="ml-[80px] w-[27px] h-[15px]"><use href="#ou"/></svg><span class="ml-[12px] inline-block origin-left" data-w="142">IT Department</span></div>
            <div class="h-[19.660px] flex items-center"><svg class="ml-[80px] w-[27px] h-[15px]"><use href="#ou"/></svg><span class="ml-[12px] inline-block origin-left" data-w="155">HR Department</span></div>
            <div class="h-[19.660px] w-[223px] ml-[77px] bg-[#cce8ff] flex items-center"><svg class="ml-[3px] w-[27px] h-[15px]"><use href="#ou"/></svg><span class="ml-[12px] inline-block origin-left" data-w="173">Sales Department</span></div>
          </div>
          <div class="mt-auto mb-[2px] ml-1 w-[360px] h-[17px] bg-[#f0f0f0] flex items-center">
            <svg class="ml-[9px] w-[11px] h-[10px]" viewBox="0 0 11 10"><path d="M10 1L2 5l8 4" fill="none" stroke="#4c4c4c" stroke-width="2.200"/></svg>
            <div class="ml-[11px] w-[178px] h-full bg-[#cdcdcd]"></div>
            <svg class="ml-[129px] w-[11px] h-[10px]" viewBox="0 0 11 10"><path d="M1 1l8 4-8 4" fill="none" stroke="#4c4c4c" stroke-width="2.200"/></svg>
          </div>
        </div>
        <!-- list -->
        <div class="ml-[6px] flex-1 bg-white border border-l-2 border-r-2 border-[#8b9098] flex flex-col">
          <div class="h-7 flex items-center">
            <div class="w-[188px] h-[26px] border-r-2 border-[#e8e8e8] flex items-center pl-[13px]"><span class="inline-block origin-left" data-w="60">Name</span></div>
            <div class="w-[188px] h-[26px] border-r-2 border-[#e8e8e8] flex items-center pl-[13px]"><span class="inline-block origin-left" data-w="45">Type</span></div>
            <div class="w-[281px] h-[26px] border-r-2 border-[#e8e8e8] flex items-center pl-[12px]"><span class="inline-block origin-left" data-w="112">Description</span></div>
          </div>
          <div class="mt-[9px] flex justify-center"><span class="inline-block origin-left" data-w="387">There are no items to show in this view.</span></div>
        </div>
      </div>
      <div class="flex-1 bg-[#f0f0f0] flex items-end">
        <div class="ml-[994px] w-[2px] h-[22px] bg-[#dcdcdc]"></div><div class="ml-[247px] w-[2px] h-[22px] bg-[#dcdcdc]"></div><div class="ml-[157px] w-[2px] h-[22px] bg-[#dcdcdc]"></div>
      </div>
    </div>

    <!-- highlight box and pointer -->
    <div class="absolute left-[207px] top-[363px] w-[296px] h-[78px] border-[5px] border-[#e81a1c]"></div>
    <svg class="absolute left-0 top-[285px] w-6 h-6" viewBox="0 0 24 24"><path d="M.7 1v19l6-4.500 5 8 5-2.500-5-6.500h10z" fill="#fff" stroke="#222" stroke-width="1.300"/></svg>
  </section>

  <!-- host status bar -->
  <footer class="h-[31px] shrink-0 bg-[#292929] flex items-center text-[17.500px] text-white">
    <span class="mt-[3px] inline-block origin-left" data-w="424">To direct input to this VM, click inside or press Ctrl+G.</span>
    <svg class="ml-auto w-6 h-[21px] mt-[3px]" viewBox="0 0 24 21"><path d="M1 13L4.500 1h15L23 13v5H1zM1 13h22" fill="none" stroke="#8a8a8a" stroke-width="1.400"/><circle cx="19" cy="16.500" r="3.700" fill="#7cc51c"/></svg>
    <svg class="ml-[6px] w-[22px] h-[22px]" viewBox="0 0 22 22" fill="none"><path d="M1 1h12v9H1zM8 6h13v9H8z" stroke="#8a8a8a" stroke-width="1.400" fill="#292929"/><path d="M1 12v9h14" stroke="#8a8a8a" stroke-dasharray="1.500 1.500"/><circle cx="17.500" cy="17.500" r="3.700" fill="#7cc51c"/></svg>
    <svg class="ml-[8px] w-[21px] h-[21px]" viewBox="0 0 21 21" fill="none" stroke="#8a8a8a" stroke-width="1.400"><path d="M1 7h4l6-5v16l-6-5H1zM13 6q3 4 0 8M16 4q4 6 0 11"/><circle cx="16.500" cy="17" r="3.700" fill="#7cc51c" stroke="none"/></svg>
    <svg class="ml-[8px] w-[18px] h-[20px]" viewBox="0 0 18 20" fill="none" stroke="#5c5c5c" stroke-width="1.300"><circle cx="9" cy="9" r="8"/><circle cx="9" cy="9" r="4"/><circle cx="9" cy="9" r="1"/><path d="M4 18.500h10"/></svg>
    <svg class="ml-[9px] w-[22px] h-[22px]" viewBox="0 0 22 22"><path d="M4 10V1h14v9" fill="none" stroke="#5c5c5c" stroke-width="1.400"/><path d="M8 5.500h2M12 5.500h2" stroke="#5c5c5c" stroke-width="1.400"/><path d="M0 10h22v12H0z" fill="#5c5c5c"/></svg>
    <svg class="ml-[7px] w-6 h-[18px]" viewBox="0 0 24 18" fill="none" stroke="#5c5c5c" stroke-width="1.300"><circle cx="12" cy="9" r="2"/><path d="M7.500 5q-2.500 4 0 8M16.500 5q2.500 4 0 8M3.500 1.500q-5 7.500 0 15M20.500 1.500q5 7.500 0 15"/></svg>
    <div class="ml-[8px] w-[2px] h-[26px] bg-[#e4e4e4] mt-1"></div>
    <svg class="ml-[10px] mr-[27px] w-[21px] h-[21px] mt-1" viewBox="0 0 21 21"><path d="M.7.700h19.600V14l-6 6.300H.7z" fill="#38dfc8" stroke="#7f8a88" stroke-width="1.300"/><path d="M14.500 20v-6h6" fill="#292929" stroke="#7f8a88"/></svg>
  </footer>
  <div class="h-[10px] shrink-0 border-t-2 border-[#54433d] bg-linear-to-r from-[#2c1814] to-[#3d1b13] flex items-end"><div class="ml-[1165px] w-[57px] h-1 rounded-t-md bg-[#4a2a22]"></div></div>
</main>

<script>
  const fit = (el) => {
    el.style.flexShrink = 0;
    const natural = el.offsetWidth, target = Number(el.dataset.w);
    if (!natural) return;
    el.style.transform = `scaleX(${target / natural})`;
    el.style.marginRight = `${target - natural}px`;
  };
  const watcher = new ResizeObserver((entries) => entries.forEach((e) => fit(e.target)));
  document.querySelectorAll('[data-w]').forEach((el) => { fit(el); watcher.observe(el); });
  addEventListener('load', () => document.querySelectorAll('[data-w]').forEach(fit));
</script>
</body>
</html>
